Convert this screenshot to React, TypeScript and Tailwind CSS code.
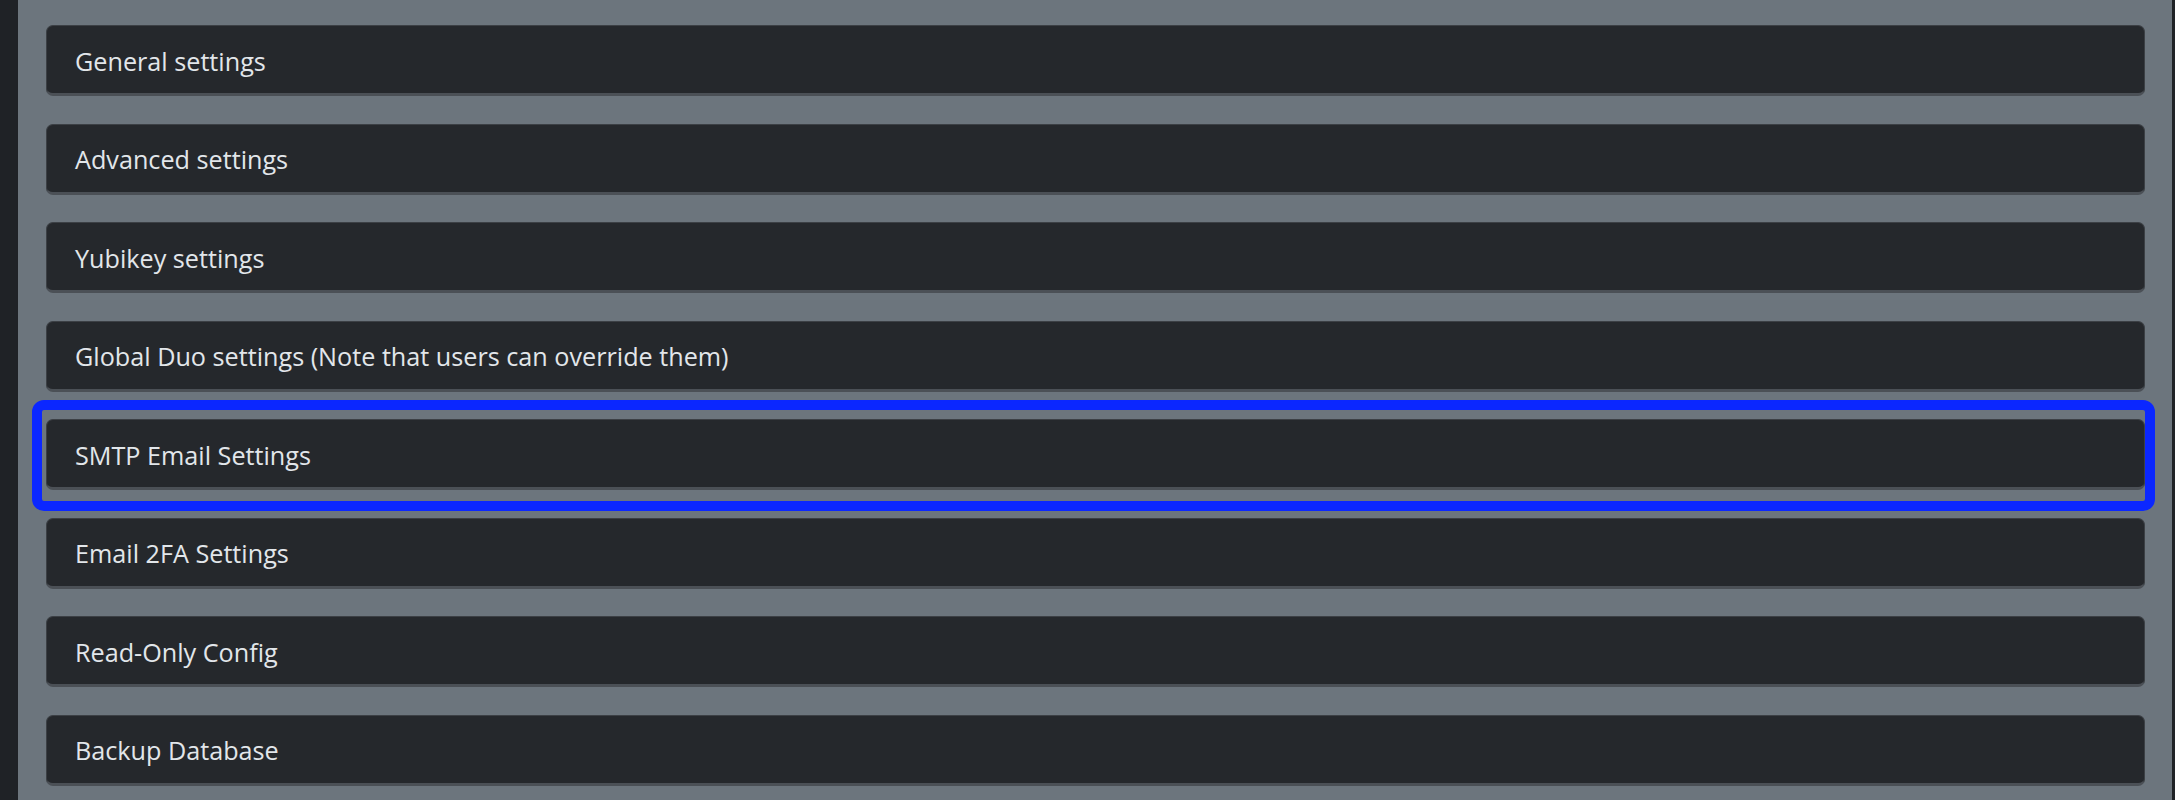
import React from "react";

const items = [
  "General settings",
  "Advanced settings",
  "Yubikey settings",
  "Global Duo settings (Note that users can override them)",
  "SMTP Email Settings",
  "Email 2FA Settings",
  "Read-Only Config",
  "Backup Database",
];

export default function App() {
  return (
    <div className="flex h-[800px] w-[2175px] overflow-hidden bg-[#1f2226]" style={{ fontFamily: '"Open Sans", "Noto Sans", sans-serif' }}>
      <div className="w-[18px] shrink-0 bg-[#1f2226]" />
      <div className="flex w-[2154px] shrink-0 flex-col gap-[27.5px] bg-[#6c757d] pl-[28px] pr-[27px] pt-[25px]">
        {items.map((label, i) => (
          <div key={label} className="relative">
            {i === 4 && (
              <div className="pointer-events-none absolute -bottom-[21px] -left-[14px] -right-[10px] -top-[19px] rounded-[12px] border-[10px] border-[#0b27ff]" />
            )}
            <div className="flex h-[71px] items-center rounded-[7px] border border-[#3c4045] border-b-[3px] border-b-[#4b5056] bg-[#25282c] pl-[28px] pt-[4px] text-[25.2px] text-[#e2e6ea]">
              {label}
            </div>
          </div>
        ))}
      </div>
      <div className="w-[3px] shrink-0 bg-[#1f2226]" />
    </div>
  );
}
